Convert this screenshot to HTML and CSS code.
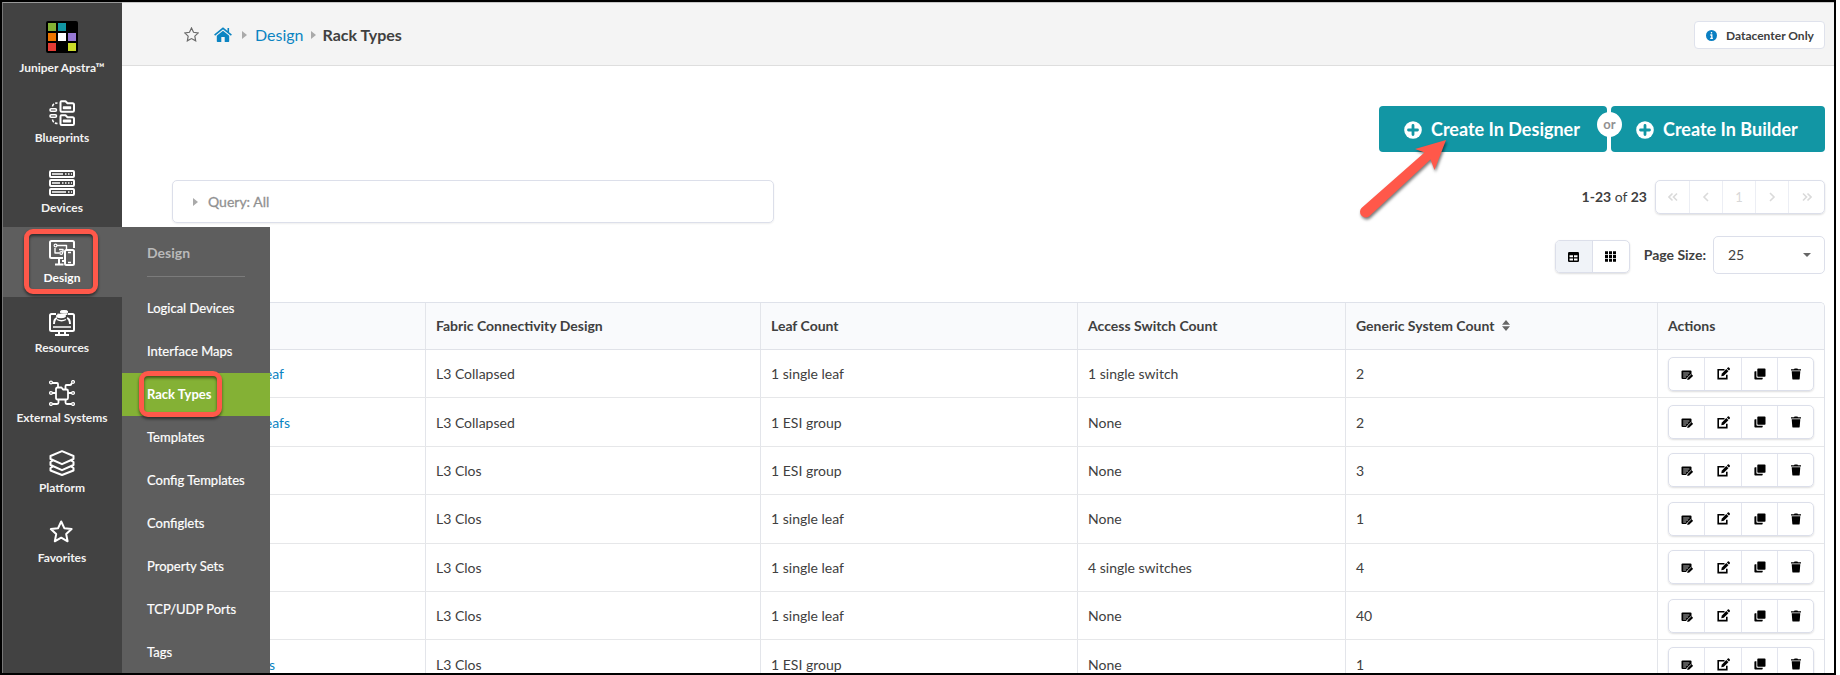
FILE: index.html
```html
<!DOCTYPE html>
<html lang="en">
<head>
<meta charset="utf-8">
<title>Rack Types</title>
<link rel="stylesheet" href="styles.css">
</head>
<body>
<svg class="defs" width="0" height="0">
  <symbol id="note" viewBox="0 0 12 12"><path d="M1.500 1.500h8q1 0 1 1v2.500L5 10H1.500q-1 0-1-1V2.500q0-1 1-1z"/><path d="M2.200 4h6.200M2.200 6h5M2.200 8h3" stroke="#fff" stroke-width=".7"/><path d="M6.200 11l.4-2.200 3.800-3.700 1.700 1.700-3.800 3.700z"/><path d="M5.800 9.500l4.300-4.200" stroke="#fff" stroke-width=".6"/></symbol>
  <symbol id="edit" viewBox="0 0 13 13"><path d="M7.500 2.800H1.200v8.800h8.600V7.800" fill="none" stroke="#000" stroke-width="1.600"/><path d="M4.300 9.300l.4-2.600 4.600-4.600 2.100 2.100-4.600 4.600z"/><path d="M9.900 1.500l.9-.9q.6-.5 1.200 0l.8.800q.5.600 0 1.200l-.9.900z"/></symbol>
  <symbol id="copy" viewBox="0 0 12 12"><rect x="3.300" y=".6" width="8.200" height="8.200" rx=".8"/><path d="M2.400 3.200H1.200q-.8 0-.8.800v6.700q0 .8.800.8h6.700q.8 0 .8-.8v-1H3.200q-.8 0-.8-.8z"/></symbol>
  <symbol id="trash" viewBox="0 0 12 12"><path d="M1 1.200h3L4.600.4h2.800l.6.8h3v1.300H1zM1.700 3.300h8.600l-.6 7.400q-.1.900-1 .9H3.300q-.9 0-1-.9z"/></symbol>
  <symbol id="plus" viewBox="0 0 18 18"><circle cx="9" cy="9" r="8.800" fill="#fff"/><path d="M9 4.500v9M4.500 9h9" stroke="#1296a4" stroke-width="2.800" stroke-linecap="round"/></symbol>
</svg>
<div class="frame">
  <nav class="sidebar">
    <div class="brand">
      <svg width="32" height="32" viewBox="0 0 32 32"><rect width="32" height="32" rx="2"/><path fill="#84b135" d="M2 2h8v8H2z"/><path fill="#1296a4" d="M12 2h8v8h-8z"/><path fill="#ee7600" d="M2 12h8v8H2z"/><path fill="#fff" d="M12 12h8v8h-8z"/><path fill="#9678d3" d="M22 12h8v8h-8z"/><path fill="#e53c35" d="M2 22h8v8H2z"/><path fill="#cbdb2a" d="M22 22h8v8h-8z"/></svg>
      <span>Juniper Apstra™</span>
    </div>
    <div class="item"><svg viewBox="0 0 26 26"><path d="M11.500 2.500q0-1.200 1-1.200h4l2 2h5q1.500 0 1.500 1.500v5.700q0 1.200-1.200 1.200H12.700q-1.200 0-1.200-1.200zM11.500 16.500q0-1.200 1-1.200h4l2 2h5q1.500 0 1.500 1.500v5q0 1.200-1.200 1.200H12.700q-1.200 0-1.200-1.200z"/><path d="M14.500 8.500v-1.500h7v1.500zM14.500 21.800v-1.500h7v1.500z" stroke-width="1.400"/><g stroke-width="1.600"><rect x="1" y="8.800" width="6.500" height="2.400" rx="1.200"/><rect x="1" y="14.800" width="6.500" height="2.400" rx="1.200"/><path d="M3.500 6.500Q4 3 8.500 3M3.500 19.500Q4 23.500 8.500 23.500" stroke-dasharray="3 1.500"/></g></svg><span>Blueprints</span></div>
    <div class="item"><svg viewBox="0 0 26 26"><rect x="1" y="1" width="24" height="6" rx="1"/><rect x="1" y="10" width="24" height="6" rx="1"/><rect x="1" y="19" width="24" height="6" rx="1"/><path d="M3 4h11M16 4h1.500M19 4h1.500M22 4h1M3 13h8M13 13h1.500M16 13h1.500M19 13h1.500M22 13h1M3 22h14M19 22h1.500M22 22h1" stroke-width="1.300"/></svg><span>Devices</span></div>
    <div class="item active"><svg viewBox="0 0 26 26"><path d="M14 18H2.500Q1 18 1 16.500v-14Q1 1 2.500 1h21Q25 1 25 2.500V8M10 18v6M6 24.500h8.500M13 21h2"/><rect x="16" y="10" width="9" height="15" rx="1.500"/><path d="M19 12.500h3M19 22.500h3M8 5.500h9.500v4.500M6 8v5h4.500M10 9.500h4v3" stroke-width="1.400"/><circle cx="6.500" cy="5.500" r="1.400" stroke-width="1.200"/><circle cx="12.200" cy="13" r="1.400" stroke-width="1.200"/></svg><span>Design</span></div>
    <div class="item"><svg viewBox="0 0 26 26"><path d="M7 4H2.500Q1 4 1 5.500v14Q1 21 2.500 21h21q1.500 0 1.500-1.500v-14Q25 4 23.500 4H19M10 21v4M16 21v4M6 25h14M5 14q0-5 3-6M21 14q0-5-3-6"/><path d="M4 17h18" stroke-width="1.500"/><ellipse cx="15" cy="1.800" rx="4" ry="1.300" fill="#fff" stroke-width="1"/><g stroke-width="1.300"><ellipse cx="12" cy="6" rx="4.300" ry="1.500" fill="#fff"/><path d="M8 9.500q4.500 2.500 9 0M8.500 4q3 1 10 0"/></g></svg><span>Resources</span></div>
    <div class="item"><svg viewBox="0 0 26 26"><path d="M7 9q0-1.500 1.500-1.500h4L14 9.500h3.500Q19 9.500 19 11v7q0 1.500-1.500 1.500h-9Q7 19.500 7 18zM3 3h5q1 0 1 1v3M16.500 9V6q0-1 1-1h3.500q1.500 0 1.500-2M3 13h4M19 13h4M3.500 24h4.500q1.500 0 1.500-1.500V20M22.500 24H18q-1.500 0-1.500-1.500V20" stroke-width="1.800"/><g stroke-width="1.300"><circle cx="2" cy="2.500" r="1.400"/><circle cx="24" cy="2" r="1.400"/><circle cx="2" cy="13" r="1.400"/><circle cx="24" cy="13" r="1.400"/><circle cx="2" cy="24" r="1.400"/><circle cx="24" cy="24" r="1.400"/></g></svg><span>External Systems</span></div>
    <div class="item"><svg viewBox="0 0 26 26"><path d="M13 1.200L24.500 6v3L13 14.200 1.500 9V6zM4 10.500L1.500 12v3L13 20.200 24.500 15v-3L22 10.500M4 16.500L1.500 18v2.500L13 25l11.500-4.500V18L22 16.500"/></svg><span>Platform</span></div>
    <div class="item"><svg viewBox="0 0 26 26"><path d="M12.200 1.500l3.100 6.700 7.300.9-5.400 5 1.400 7.200-6.400-3.600-6.400 3.600 1.400-7.200-5.400-5 7.300-.9z"/></svg><span>Favorites</span></div>
  </nav>

  <main class="content">
    <header class="topbar">
      <div class="crumbs">
        <svg class="star" width="15" height="15" viewBox="0 0 14 14"><path d="M7 .9l1.900 4 4.400.6-3.200 3 .8 4.400L7 10.800l-3.900 2.100.8-4.400-3.200-3 4.400-.6z" fill="none" stroke="#6a6a6a" stroke-width="1.100"/></svg>
        <svg class="home" width="18" height="15" viewBox="0 0 18 15"><path d="M9 3.700l6.200 5.100v5.500q0 .7-.7.700h-3.800V10H7.300v5H3.500q-.7 0-.7-.7V8.800z"/><path d="M.6 8.100L9 1.300l8.400 6.800M14.300 1v4" fill="none" stroke="#0b84c2" stroke-width="1.600"/></svg>
        <i class="caret"></i><a>Design</a><i class="caret"></i><b>Rack Types</b>
      </div>
      <div class="scope"><svg width="11" height="11" viewBox="0 0 11 11"><circle cx="5.500" cy="5.500" r="5.500" fill="#0b7fc2"/><path d="M5.500 2v1.600M4.300 5h1.500v3.200M4.200 8.300h2.700" stroke="#fff" stroke-width="1.300" fill="none"/></svg>Datacenter Only</div>
    </header>

    <div class="create">
      <button><svg width="18" height="18"><use href="#plus"/></svg>Create In Designer</button>
      <span class="or">or</span>
      <button class="builder"><svg width="18" height="18"><use href="#plus"/></svg>Create In Builder</button>
    </div>

    <div class="filter">
      <div class="query"><i class="caret"></i>Query: All</div>
      <div class="paging">
        <span class="range"><b>1-23</b> of <b>23</b></span>
        <div class="pager">
          <span><svg width="10" height="10"><path d="M4.500 1.500L1 5l3.500 3.500M9 1.500L5.500 5 9 8.500"/></svg></span>
          <span><svg width="10" height="10"><path d="M7 1L3 5l4 4"/></svg></span>
          <span>1</span>
          <span><svg width="10" height="10"><path d="M3 1l4 4-4 4"/></svg></span>
          <span><svg width="10" height="10"><path d="M1 1.500L4.500 5 1 8.500M5.500 1.500L9 5 5.500 8.500"/></svg></span>
        </div>
      </div>
    </div>

    <div class="view">
      <div class="toggle">
        <span class="on"><svg width="11" height="10"><rect width="11" height="10" rx="1.200"/><path d="M1.500 3.200H5v2H1.500zM6 3.200h3.500v2H6zM1.500 6.400H5v2H1.500zM6 6.400h3.500v2H6z" fill="#fff"/></svg></span>
        <span><svg width="11" height="11"><path d="M0 .3h3v3H0zM4 .3h3v3H4zM8 .3h3v3H8zM0 4h3v3H0zM4 4h3v3H4zM8 4h3v3H8zM0 7.700h3v3H0zM4 7.700h3v3H4zM8 7.700h3v3H8z"/></svg></span>
      </div>
      <b class="size-label">Page Size:</b>
      <div class="select">25<i class="down"></i></div>
    </div>

    <div class="table" id="racks">
      <div class="row head"><div></div><div>Fabric Connectivity Design</div><div>Leaf Count</div><div>Access Switch Count</div><div>Generic System Count<svg class="sort" width="8" height="11"><path d="M4 0l4 4.700H0zM0 6.300h8L4 11z"/></svg></div><div>Actions</div></div>
    </div>
  </main>

  <aside class="submenu">
    <h2>Design</h2>
    <ul>
      <li>Logical Devices</li><li>Interface Maps</li><li class="current">Rack Types</li><li>Templates</li><li>Config Templates</li><li>Configlets</li><li>Property Sets</li><li>TCP/UDP Ports</li><li>Tags</li>
    </ul>
  </aside>
  <div class="mark mark-design"></div>
  <div class="mark mark-rack"></div>
  <svg class="arrow" width="110" height="100" viewBox="1350 130 110 100"><path d="M1446 140L1434.500 170 1430.500 159.500 1369 216.500A5.700 5.700 0 0 1 1361.500 208L1424.500 152.500 1415 149z"/></svg>
</div>
<script src="rows.js"></script>
</body>
</html>
```
FILE: styles.css
```css
* { box-sizing: border-box; }
body { margin: 0; background: #fff; font-family: Lato, "Liberation Sans", sans-serif; font-size: 14px; color: #404040; }
.defs { position: absolute; }
.frame { position: relative; width: 1836px; height: 675px; border: 2px solid #000; display: flex; overflow: hidden; }
.sidebar { width: 120px; flex: none; background: #424242; border-left: 1px solid #777; border-top: 1px solid #999; color: #fff; font-size: 12px; font-weight: 700; }
.brand, .item { display: flex; flex-direction: column; align-items: center; height: 70px; padding-right: 1px; line-height: 16px; white-space: nowrap; color: #f2f2f2; }
.brand { height: 84px; padding-top: 18px; gap: 7px; }
.item { padding-top: 13px; gap: 4px; }
.item svg { width: 26px; height: 26px; fill: none; stroke: #fff; stroke-width: 2; stroke-linejoin: round; flex: none; }
.item.active { background: #5e5e5e; color: #fff; }

.content { flex: 1; min-width: 0; border-top: 1px solid #c8c8c8; }
.topbar { height: 63px; background: #f4f4f4; border-bottom: 1px solid #dedede; display: flex; justify-content: space-between; align-items: center; padding: 2px 9px 0 62px; }
.crumbs { display: flex; align-items: center; font-size: 16px; padding-bottom: 2px; }
.crumbs b { color: #404040; }
.crumbs a, .home { color: #0b84c2; fill: #0b84c2; }
.home { margin-left: 15px; }
.caret { width: 0; height: 0; border: 4px solid transparent; border-left: 5px solid #aaa; border-right: 0; }
.crumbs .caret { margin: 2px 8px 0 10px; }
.crumbs a + .caret { margin: 2px 7px 0 7px; }
.scope { display: flex; align-items: center; gap: 9px; width: 131px; height: 28px; padding-left: 11px; background: #fff; border: 1px solid #dfe2ec; border-radius: 4px; font-size: 12px; font-weight: 700; white-space: nowrap; }

.create { display: flex; gap: 4px; justify-content: flex-end; padding: 40px 9px 0; position: relative; }
.create button { display: flex; align-items: center; gap: 9px; width: 228px; height: 46px; padding: 0 0 1px 25px; border: 0; border-radius: 4px; background: #1296a4; color: #fff; font: 700 18px Lato, sans-serif; white-space: nowrap; }
.create button svg { margin-top: 2px; }
.create .builder { width: 214px; }
.or { position: absolute; right: 212px; top: 46px; width: 25px; height: 25px; border-radius: 50%; background: #fff; color: #919191; font-weight: 700; font-size: 13px; line-height: 25px; text-align: center; }

.filter { display: flex; justify-content: space-between; align-items: flex-start; padding: 28px 9px 0 50px; }
.query { display: flex; align-items: center; gap: 10px; width: 602px; height: 43px; padding-left: 20px; border: 1px solid #dcdfea; border-radius: 5px; color: #919191; -webkit-text-stroke: .3px #919191; box-shadow: 0 1px 2px #0001; }
.paging { display: flex; align-items: center; gap: 8px; }
.range { padding-bottom: 2px; }
.pager { display: flex; width: 170px; height: 34px; border: 1px solid #dcdfea; border-radius: 5px; box-shadow: 0 1px 2px #0002; color: #d8d8d8; font-size: 13px; }
.pager span { width: 33px; display: flex; align-items: center; justify-content: center; border-right: 1px solid #eceef4; }
.pager span:first-child { width: 34px; }
.pager span:last-child { flex: 1; border: 0; }
.pager svg { fill: none; stroke: #dadada; stroke-width: 1.600; }

.view { display: flex; justify-content: flex-end; align-items: center; height: 38px; margin-top: 13px; padding-right: 9px; }
.toggle { display: flex; width: 75px; height: 33px; margin-top: 3px; border: 1px solid #dcdfea; border-radius: 5px; overflow: hidden; box-shadow: 0 1px 2px #0002; }
.toggle span { flex: 1; display: flex; align-items: center; justify-content: center; }
.toggle .on { background: #f0f3f8; border-right: 1px solid #dcdfea; }
.size-label { margin: 0 7px 1px 14px; }
.select { display: flex; justify-content: space-between; align-items: center; width: 112px; height: 38px; padding: 0 13px 1px 14px; border: 1px solid #dcdfea; border-radius: 5px; }
.down { border: 4px solid transparent; border-top: 4px solid #666; border-bottom: 0; }

.table { margin: 28px 9px 0 50px; border: 1px solid #dfe2ea; border-radius: 5px 5px 0 0; border-bottom: 0; }
.row { display: grid; grid-template-columns: 253px 335px 317px 268px 312px 1fr; height: 48.400px; border-bottom: 1px solid #e6e7e9; }
.row > div { display: flex; align-items: center; padding-left: 10px; border-right: 1px solid #e3e5ea; white-space: nowrap; }
.row > div:last-child { border-right: 0; }
.row.head { height: 47px; background: #f9fafc; font-weight: 700; border-radius: 4px 4px 0 0; border-color: #e0e2e8; }
.row.head > div { padding-bottom: 2px; }
.sort { margin-left: 8px; fill: #666; }
.name { color: #0b84c2; justify-content: flex-end; }
.acts { display: flex; width: 146px; height: 34px; border: 1px solid #dcdfea; border-radius: 5px; box-shadow: 0 1px 2px #0002; }
.acts span { flex: none; width: 36px; display: flex; align-items: center; justify-content: center; border-right: 1px solid #e3e5ee; }
.acts span:nth-child(2) { width: 37px; }
.acts span:last-child { width: 35px; border: 0; }
.acts svg { width: 12px; height: 12px; }
.acts span:first-child svg { margin-top: 2px; }
.acts span:nth-child(2) svg { width: 13px; height: 13px; }

.submenu { position: absolute; left: 120px; top: 225px; width: 148px; height: 446px; background: #5e5e5e; color: #fff; font-size: 13px; }
.submenu h2 { margin: 0 25px 10px; height: 50px; padding-top: 3px; line-height: 46px; font-size: 14px; color: #b9b9b9; border-bottom: 1px solid #7b7b7b; }
.submenu ul { margin: 0; padding: 0; list-style: none; -webkit-text-stroke: .2px #fff; }
.submenu li { height: 43px; line-height: 43px; padding-left: 25px; white-space: nowrap; }
.submenu .current { background: #84b135; font-weight: 700; -webkit-text-stroke: 0; }

.mark { position: absolute; border: 5px solid #ff584a; border-radius: 9px; filter: drop-shadow(0 2px 1.500px #0008); }
.mark-design { left: 22px; top: 227px; width: 74px; height: 65px; }
.mark-rack { left: 137px; top: 369px; width: 83px; height: 46px; }
.arrow { position: absolute; left: 1348px; top: 128px; fill: #ff584a; filter: drop-shadow(1px 2px 1.500px #0008); }
```
FILE: rows.js
```js
const rows = [
  ["eaf", 112, "L3 Collapsed", "1 single leaf", "1 single switch", "2"],
  ["eafs", 118, "L3 Collapsed", "1 ESI group", "None", "2"],
  ["", 0, "L3 Clos", "1 ESI group", "None", "3"],
  ["", 0, "L3 Clos", "1 single leaf", "None", "1"],
  ["", 0, "L3 Clos", "1 single leaf", "4 single switches", "4"],
  ["", 0, "L3 Clos", "1 single leaf", "None", "40"],
  ["s", 103, "L3 Clos", "1 ESI group", "None", "1"]
];
const actions = ["note", "edit", "copy", "trash"]
  .map(id => `<span><svg><use href="#${id}"/></svg></span>`).join("");
const nameColumn = 253;
// Names end at a given distance into the first column, partly under the menu.
document.getElementById("racks").insertAdjacentHTML("beforeend", rows.map(([name, end, ...cells]) =>
  `<div class="row"><div class="name" style="padding-right:${end ? nameColumn - end : 0}px">${name}</div>` +
  cells.map(c => `<div>${c}</div>`).join("") +
  `<div><div class="acts">${actions}</div></div></div>`).join(""));
```
